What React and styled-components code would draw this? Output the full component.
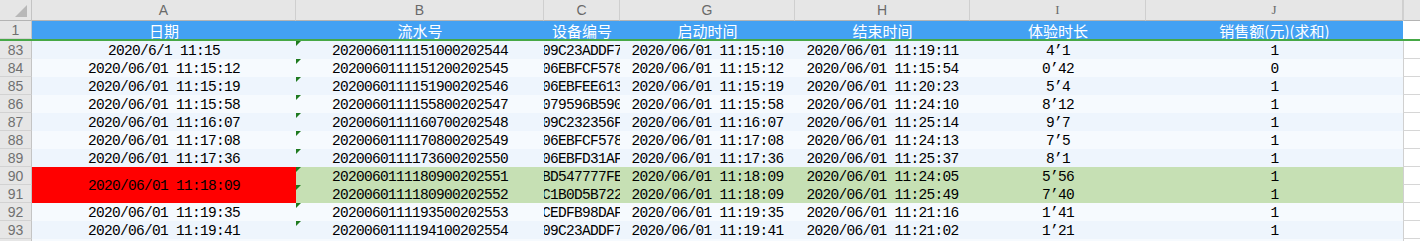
import React from "react";
import styled, { createGlobalStyle } from "styled-components";

const GlobalStyle = createGlobalStyle`
  body {
    margin: 0;
    background: #ffffff;
    overflow: hidden;
  }
`;

const Sheet = styled.div`
  display: grid;
  grid-template-columns: 32px 264px 248px 76px 175px 175px 176px 257px 1fr;
  grid-template-rows: 21px 18px 2px;
  grid-auto-rows: 18px;
  width: 1420px;
  height: 241px;
  overflow: hidden;
`;

const Corner = styled.div`
  box-sizing: border-box;
  background: #e6e6e6;
  border-right: 1px solid #c4c4c4;
  border-bottom: 1px solid #b4b4b4;
  display: flex;
  align-items: flex-end;
  justify-content: flex-end;
  padding: 0 4px 3px 0;
`;

const ColHead = styled.div`
  box-sizing: border-box;
  background: #e6e6e6;
  border-right: 1px solid #cfcfcf;
  border-bottom: 1px solid #b4b4b4;
  display: flex;
  align-items: center;
  justify-content: center;
  font-family: ${(p) => (p.$serif ? '"Liberation Serif", serif' : '"Liberation Sans", Arial, sans-serif')};
  font-size: ${(p) => (p.$serif ? "13px" : "14px")};
  color: #6a6a6a;
`;

const RowNum = styled.div`
  box-sizing: border-box;
  background: #e6e6e6;
  border-right: 1px solid #c4c4c4;
  border-bottom: 1px solid #d2d2d2;
  display: flex;
  align-items: center;
  justify-content: center;
  padding-top: 1px;
  font-family: "Liberation Sans", Arial, sans-serif;
  font-size: 14px;
  color: #707070;
`;

const Title = styled.div`
  background: #43a1f3;
  display: flex;
  align-items: center;
  justify-content: center;
  font-family: "Noto Sans CJK SC", "Noto Sans", sans-serif;
  font-size: 15px;
  color: #ffffff;
  white-space: nowrap;
`;

const Blank = styled.div`
  box-sizing: border-box;
  background: ${(p) => (p.$head ? "#e6e6e6" : "#ffffff")};
  border-left: ${(p) => (p.$plain ? "none" : "1px solid #d0d0d0")};
  border-bottom: ${(p) => (p.$plain ? "none" : p.$head ? "1px solid #b4b4b4" : "1px solid #d6d6d6")};
`;

const FreezeLine = styled.div`
  grid-column: 1 / -1;
  background: #46a846;
`;

const Cell = styled.div`
  position: relative;
  background: ${(p) => p.$bg};
  display: flex;
  align-items: center;
  justify-content: center;
  overflow: hidden;
  padding-top: 1px;
  font-family: "Liberation Mono", "DejaVu Sans Mono", monospace;
  font-size: 14.5px;
  letter-spacing: -0.7px;
  color: #000000;
  white-space: nowrap;
  grid-row: ${(p) => (p.$span ? `span ${p.$span}` : "auto")};

  ${(p) =>
    p.$flag &&
    `
    &::before {
      content: "";
      position: absolute;
      top: 0;
      left: 0;
      border-top: 5px solid #1f7a1f;
      border-right: 5px solid transparent;
    }
  `}
`;

const Clip = styled.span`
  flex: none;
`;

const cols = [
  { key: "A", label: "日期" },
  { key: "B", label: "流水号" },
  { key: "C", label: "设备编号" },
  { key: "G", label: "启动时间" },
  { key: "H", label: "结束时间" },
  { key: "I", label: "体验时长", serif: true },
  { key: "J", label: "销售额(元)(求和)", serif: true },
];

const rows = [
  { n: 83, a: "2020/6/1 11:15", b: "2020060111151000202544", c: "809C23ADDF7A", g: "11:15:10", h: "11:19:11", i: "4’1", j: "1" },
  { n: 84, a: "2020/06/01 11:15:12", b: "2020060111151200202545", c: "006EBFCF578B", g: "11:15:12", h: "11:15:54", i: "0’42", j: "0" },
  { n: 85, a: "2020/06/01 11:15:19", b: "2020060111151900202546", c: "006EBFEE6131", g: "11:15:19", h: "11:20:23", i: "5’4", j: "1" },
  { n: 86, a: "2020/06/01 11:15:58", b: "2020060111155800202547", c: "0079596B590C", g: "11:15:58", h: "11:24:10", i: "8’12", j: "1" },
  { n: 87, a: "2020/06/01 11:16:07", b: "2020060111160700202548", c: "809C232356F1", g: "11:16:07", h: "11:25:14", i: "9’7", j: "1" },
  { n: 88, a: "2020/06/01 11:17:08", b: "2020060111170800202549", c: "006EBFCF578B", g: "11:17:08", h: "11:24:13", i: "7’5", j: "1" },
  { n: 89, a: "2020/06/01 11:17:36", b: "2020060111173600202550", c: "006EBFD31AF2", g: "11:17:36", h: "11:25:37", i: "8’1", j: "1" },
  { n: 90, a: "2020/06/01 11:18:09", merged: true, b: "2020060111180900202551", c: "ABD547777FE0", g: "11:18:09", h: "11:24:05", i: "5’56", j: "1" },
  { n: 91, skipA: true, b: "2020060111180900202552", c: "1C1B0D5B7228", g: "11:18:09", h: "11:25:49", i: "7’40", j: "1" },
  { n: 92, a: "2020/06/01 11:19:35", b: "2020060111193500202553", c: "7CEDFB98DAF3", g: "11:19:35", h: "11:21:16", i: "1’41", j: "1" },
  { n: 93, a: "2020/06/01 11:19:41", b: "2020060111194100202554", c: "809C23ADDF7A", g: "11:19:41", h: "11:21:02", i: "1’21", j: "1" },
  { n: 94, a: "", b: "", c: "", g: "", h: "", i: "", j: "" },
];

const stripe = (n) => (n % 2 === 1 ? "#eef5fd" : "#f6fafe");
const GREEN = "#c6e0b4";
const RED = "#ff0000";

function DataRow({ row }) {
  const base = stripe(row.n);
  const fill = row.n === 90 || row.n === 91 ? GREEN : base;
  const day = row.g ? "2020/06/01 " : "";
  return (
    <>
      <RowNum>{row.n}</RowNum>
      {!row.skipA &&
        (row.merged ? (
          <Cell $bg={RED} $span={2}>
            {row.a}
          </Cell>
        ) : (
          <Cell $bg={base}>{row.a}</Cell>
        ))}
      <Cell $bg={fill} $flag={row.b !== ""}>
        {row.b}
      </Cell>
      <Cell $bg={fill}>
        <Clip>{row.c}</Clip>
      </Cell>
      <Cell $bg={fill}>{day + row.g}</Cell>
      <Cell $bg={fill}>{row.g ? day + row.h : ""}</Cell>
      <Cell $bg={fill}>{row.i}</Cell>
      <Cell $bg={fill}>{row.j}</Cell>
      <Blank />
    </>
  );
}

export default function App() {
  return (
    <>
      <GlobalStyle />
      <Sheet>
        <Corner>
          <svg width="12" height="12" viewBox="0 0 12 12">
            <polygon points="12,0 12,12 0,12" fill="#b8b8b8" />
          </svg>
        </Corner>
        {cols.map((c) => (
          <ColHead key={c.key} $serif={c.serif}>
            {c.key}
          </ColHead>
        ))}
        <Blank $head />

        <RowNum>1</RowNum>
        {cols.map((c) => (
          <Title key={c.key}>{c.label}</Title>
        ))}
        <Blank $plain />

        <FreezeLine />

        {rows.map((r) => (
          <DataRow key={r.n} row={r} />
        ))}
      </Sheet>
    </>
  );
}
